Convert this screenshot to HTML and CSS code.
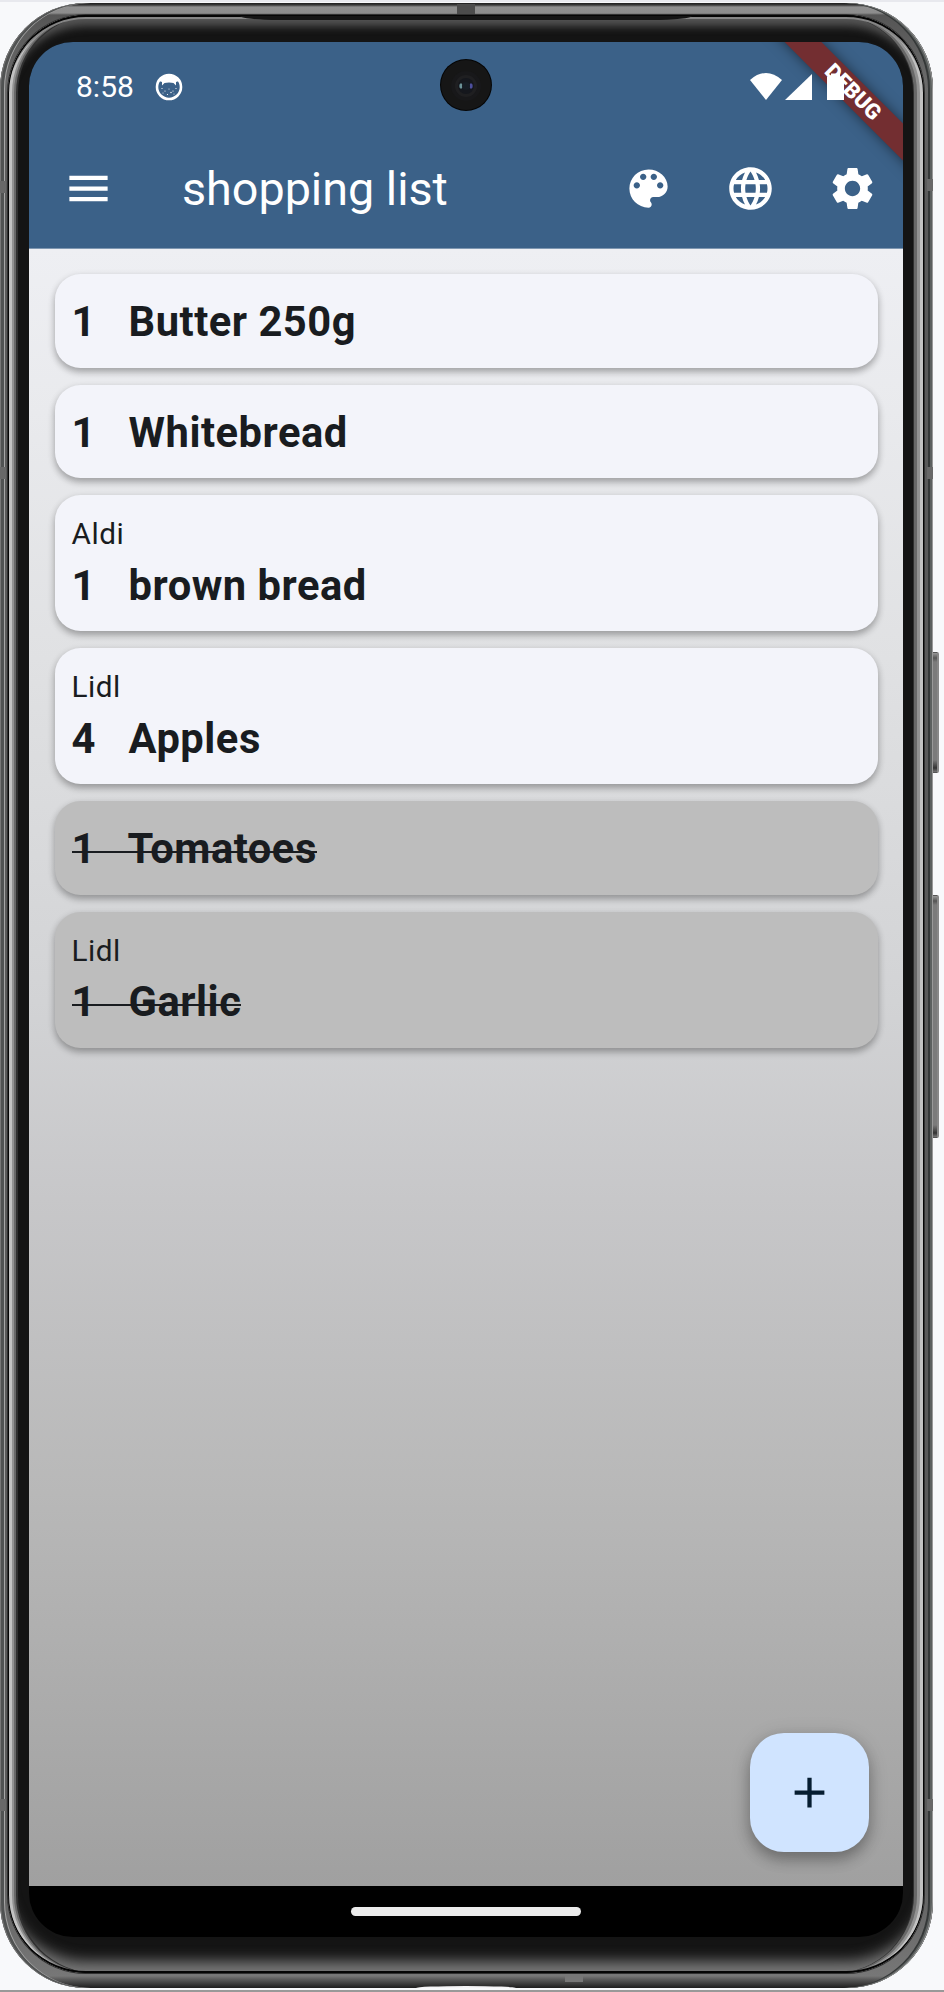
FILE: index.html
```html
<!DOCTYPE html>
<html lang="en">
<head>
<meta charset="utf-8">
<title>shopping list</title>
<link rel="stylesheet" href="styles.css">
</head>
<body>
<div class="stage">
  <span class="side-button power"></span>
  <span class="side-button volume"></span>
  <div class="frame">
    <span class="seam seam-top"></span>
    <span class="seam seam-bottom"></span>
    <span class="seam-side left-a"></span><span class="seam-side left-b"></span><span class="seam-side left-c"></span>
    <span class="seam-side right-a"></span><span class="seam-side right-b"></span><span class="seam-side right-c"></span>
    <span class="port"></span>
    <div class="bezel">
      <span class="speaker"></span>
      <div class="screen">
        <header class="top">
          <div class="status">
            <span class="time">8:58</span>
            <svg class="notif" viewBox="0 0 28 28"><circle cx="14" cy="14" r="12" fill="none" stroke="#fff" stroke-width="2.6"/><path d="M4 8C8 1 20 1 24 8L21 9V12.500L18.500 10C16 9.300 12 9.300 9.500 10L7 12.500V9Z" fill="#fff"/><g fill="#fff"><circle cx="7" cy="15.500" r=".6"/><circle cx="10" cy="18" r=".6"/><circle cx="14" cy="16" r=".5"/><circle cx="18" cy="18" r=".6"/><circle cx="21" cy="15.500" r=".6"/><circle cx="16" cy="19.500" r=".7"/><circle cx="12.500" cy="21.500" r=".6"/><circle cx="8" cy="20" r=".5"/><circle cx="19" cy="21" r=".5"/></g></svg>
            <svg class="signals" viewBox="0 0 96 30"><path d="M0 8Q16-6 32 8L16 28Z" fill="#fff"/><path d="M35 28L62 2V28Z" fill="#fff"/><path d="M77 4.500H81V1.500H90V4.500H94V28H77Z" fill="#fff"/></svg>
          </div>
          <div class="appbar">
            <svg class="icon" viewBox="0 0 24 24"><path d="M3 18h18v-2H3v2zm0-5h18v-2H3v2zm0-7v2h18V6H3z"/></svg>
            <h1 class="title">shopping list</h1>
            <svg class="icon" viewBox="0 0 24 24"><path d="M12 3c-4.970 0-9 4.030-9 9s4.030 9 9 9c.83 0 1.500-.67 1.500-1.500 0-.39-.15-.74-.39-1.010-.23-.26-.38-.61-.38-.99 0-.83.67-1.500 1.500-1.500H16c2.760 0 5-2.240 5-5 0-4.420-4.030-8-9-8zm-5.500 9c-.83 0-1.500-.67-1.500-1.500S5.670 9 6.500 9 8 9.670 8 10.500 7.330 12 6.500 12zm3-4C8.670 8 8 7.330 8 6.500S8.670 5 9.500 5s1.500.67 1.500 1.500S10.330 8 9.500 8zm5 0c-.83 0-1.500-.67-1.500-1.500S13.670 5 14.500 5s1.500.67 1.500 1.500S15.330 8 14.500 8zm3 4c-.83 0-1.500-.67-1.500-1.500S16.670 9 17.500 9s1.500.67 1.500 1.500-.67 1.500-1.500 1.500z"/></svg>
            <svg class="icon" viewBox="0 0 24 24"><path d="M11.990 2C6.470 2 2 6.480 2 12s4.470 10 9.990 10C17.520 22 22 17.520 22 12S17.520 2 11.990 2zm6.930 6h-2.950c-.32-1.250-.78-2.450-1.380-3.560 1.840.63 3.370 1.910 4.330 3.560zM12 4.040c.83 1.200 1.480 2.530 1.910 3.960h-3.820c.43-1.430 1.080-2.760 1.910-3.960zM4.260 14C4.100 13.360 4 12.690 4 12s.1-1.360.26-2h3.380c-.08.66-.14 1.320-.14 2s.06 1.340.14 2H4.260zm.82 2h2.950c.32 1.250.78 2.450 1.380 3.560-1.840-.63-3.370-1.900-4.330-3.560zm2.950-8H5.080c.96-1.660 2.490-2.930 4.330-3.560C8.810 5.550 8.350 6.750 8.030 8zM12 19.960c-.83-1.200-1.480-2.530-1.910-3.960h3.820c-.43 1.430-1.080 2.760-1.910 3.960zM14.340 14H9.660c-.09-.66-.16-1.320-.16-2s.07-1.350.16-2h4.680c.09.65.16 1.320.16 2s-.07 1.340-.16 2zm.25 5.560c.6-1.110 1.060-2.310 1.380-3.560h2.950c-.96 1.650-2.490 2.930-4.330 3.560zM16.360 14c.08-.66.14-1.320.14-2s-.06-1.340-.14-2h3.380c.16.64.26 1.310.26 2s-.1 1.360-.26 2h-3.380z"/></svg>
            <svg class="icon" viewBox="0 0 24 24"><path d="M19.140 12.940c.04-.3.06-.61.06-.94 0-.32-.02-.64-.07-.94l2.030-1.580c.18-.14.23-.41.12-.61l-1.920-3.320c-.12-.22-.37-.29-.59-.22l-2.390.96c-.5-.38-1.030-.7-1.620-.94l-.36-2.540c-.04-.24-.24-.41-.48-.41h-3.840c-.24 0-.43.17-.47.41l-.36 2.540c-.59.24-1.130.57-1.620.94l-2.390-.96c-.22-.08-.47 0-.59.22L2.740 8.870c-.12.21-.08.47.12.61l2.030 1.580c-.05.3-.09.63-.09.94s.02.64.07.94l-2.030 1.580c-.18.14-.23.41-.12.61l1.920 3.320c.12.22.37.29.59.22l2.390-.96c.5.38 1.030.7 1.620.94l.36 2.540c.05.24.24.41.48.41h3.840c.24 0 .44-.17.47-.41l.36-2.540c.59-.24 1.130-.56 1.620-.94l2.390.96c.22.08.47 0 .59-.22l1.920-3.320c.12-.22.07-.47-.12-.61l-2.010-1.580zM12 15.600c-1.980 0-3.600-1.620-3.600-3.600s1.620-3.600 3.600-3.600 3.600 1.620 3.600 3.600-1.620 3.600-3.600 3.600z"/></svg>
          </div>
        </header>
        <main class="list">
          <article class="card"><p class="item">1   Butter 250g</p></article>
          <article class="card"><p class="item">1   Whitebread</p></article>
          <article class="card"><p class="store">Aldi</p><p class="item">1   brown bread</p></article>
          <article class="card"><p class="store">Lidl</p><p class="item">4   Apples</p></article>
          <article class="card done"><p class="item">1   Tomatoes</p></article>
          <article class="card done"><p class="store">Lidl</p><p class="item">1   Garlic</p></article>
        </main>
        <nav class="navbar"><span class="pill"></span></nav>
        <button class="fab" aria-label="Add"><svg viewBox="0 0 24 24"><path d="M19 13h-6v6h-2v-6H5v-2h6V5h2v6h6v2z"/></svg></button>
        <div class="ribbon">DEBUG</div>
        <svg class="camera" viewBox="0 0 52 52"><circle cx="26" cy="26" r="26" fill="#050505"/><circle cx="26" cy="26" r="25" fill="#161616"/><circle cx="26" cy="27" r="15" fill="#18181a"/><circle cx="26" cy="27" r="11" fill="#1f1f21"/><circle cx="26" cy="27" r="8" fill="#15171d"/><ellipse cx="21" cy="27" rx="1.700" ry="2.800" fill="#6b9298"/><ellipse cx="31" cy="27" rx="1.700" ry="2.800" fill="#4d4f9e"/><circle cx="26" cy="27" r="4" fill="#161c24"/></svg>
      </div>
    </div>
  </div>
</div>
</body>
</html>
```
FILE: styles.css
```css
* { box-sizing: border-box; }
body { margin: 0; background: #f8f9fb; font-family: Roboto, "Liberation Sans", sans-serif; }
.stage {
  position: relative; width: 944px; height: 1992px; overflow: hidden;
  padding: 3px 0 0 0;
  border-bottom: 2px solid #999; box-shadow: inset 0 2px #e8e9ee;
}

/* Device body */
.frame {
  position: relative; width: 933px; height: 1985px; border-radius: 86px;
  padding: 12px 9px 15px 8px;
  background: linear-gradient(#1d1d1d 0, #3a3a3a 2px, #8f8f8f 4px, #8c8c8c 10px, #555 12px, #6a6a6a 80px, #5a5a5a 200px, #5a5a5a 1850px, #777 1973px, #5d5d5d 1976px, #1e1e1e 1985px);
  box-shadow: inset 1px 0 #777, inset -1px 0 #999, inset 4px 0 #505252, inset -3px 0 #5c605f, inset 5px 0 #a5a5a5, inset -5px 0 #353838;
}
.bezel {
  position: relative; height: 1958px; border-radius: 78px; padding: 27px 21px 36px 21px;
  background: #141414;
  box-shadow:
    0 0 0 1px #303030,
    inset 0 0 0 1px #050505,
    inset 0 2px #050505, inset 0 4px #858585,
    inset 0 -2px #050505,
    inset 4px 0 #c2c2c2, inset -4px 0 #c2c2c2,
    inset 6px 0 #929292, inset -7px 0 #929292,
    inset 8px 0 #686868, inset -10px 0 #686868,
    inset 10px 0 #303030, inset -11px 0 #303030,
    inset 0 13px 8px -2px #555,
    inset 0 -16px 14px -4px #777;
}
.speaker { position: absolute; left: 232px; top: 1px; width: 452px; height: 4px; background: #151515; border-radius: 0 0 40px 40px / 0 0 4px 4px; }
.seam { position: absolute; width: 18px; background: #4c4c4c; }
.seam-top { left: 457px; top: 1px; height: 11px; }
.seam-bottom { left: 565px; top: 1971px; height: 8px; background: #777; }
.seam-side { position: absolute; width: 6px; height: 12px; background: #686868; }
.left-a { left: 0; top: 178px; }
.left-b { left: 0; top: 464px; }
.left-c { left: 0; top: 1796px; }
.right-a { right: 0; top: 176px; }
.right-b { right: 0; top: 464px; }
.right-c { right: 0; top: 1796px; }
.port { position: absolute; left: 416px; bottom: 0; width: 100px; height: 2px; background: #f4f4f6; border-radius: 50px 50px 0 0 / 2px 2px 0 0; }
.side-button { position: absolute; left: 930px; width: 9px; border: 1px solid #555; border-right: 2px solid #888; border-radius: 0 2px 2px 0; background: linear-gradient(#999 0, #555 5px, #7b7b7b 9px, #7b7b7b calc(100% - 12px), #333 calc(100% - 4px), #777); }
.power { top: 652px; height: 121px; }
.volume { top: 895px; height: 243px; }

/* Screen */
.screen { position: relative; height: 1895px; width: 874px; border-radius: 44px; overflow: hidden; display: flex; flex-direction: column; background: #000; }
.top { height: 207px; background: #3b6188; color: #fff; display: flex; flex-direction: column; border-bottom: 1px solid #7f97b1; flex: none; }
.status { height: 95px; display: flex; align-items: center; padding: 0 57px 5px 47px; }
.time { font-size: 30px; line-height: 36px; }
.notif { width: 28px; height: 28px; margin-left: 21.500px; }
.signals { position: relative; z-index: 2; width: 96px; height: 30px; margin-left: auto; }
.appbar { height: 103px; display: flex; align-items: center; padding: 0 25.500px 0 34px; }
.icon { width: 51px; height: 51px; fill: #fff; margin-left: 51px; flex: none; }
.icon:first-child { margin-left: 0; }
.title { margin: 0 auto 0 68px; font-size: 46.700px; line-height: 60px; font-weight: 400; }
.list {
  flex: 1; display: flex; flex-direction: column; gap: 17px; padding: 25px 25.500px;
  background: linear-gradient(#eeeff3 0, #e9eaed 10%, #e0e1e3 25%, #d2d3d5 46%, #c7c7c9 58%, #b8b8b8 76%, #a0a0a0 100%);
}
.card { border-radius: 25.500px; padding: 18px 17px 16px; background: #f3f4fa; color: #191c20; box-shadow: 0 4px 7px rgba(0,0,0,.27), 0 2px 8px rgba(0,0,0,.08); }
.card.done { background: #bdbdbd; }
.card p { margin: 0; white-space: pre; }
.item { font-size: 41.700px; line-height: 59.500px; font-weight: 700; letter-spacing: .51px; }
/* Strike line sits a little below the font's own line-through position */
.done .item { width: fit-content; background: linear-gradient(#191c20, #191c20) 0 32px / 100% 2px no-repeat; }
.store { font-size: 29.760px; line-height: 42.500px; letter-spacing: .53px; }
.navbar { height: 51px; flex: none; display: flex; justify-content: center; padding-top: 21px; }
.pill { width: 230px; height: 9px; border-radius: 5px; background: #ebebeb; }

.fab { position: absolute; right: 34px; bottom: 85px; width: 119px; height: 119px; padding: 0; border: 0; border-radius: 34px; background: #d0e4ff; display: flex; align-items: center; justify-content: center; box-shadow: 0 8px 14px rgba(0,0,0,.24), 0 3px 20px rgba(0,0,0,.16); }
.fab svg { width: 51px; height: 51px; fill: #061d31; }
.ribbon { position: absolute; left: 704px; top: 37px; width: 240px; height: 26px; transform: rotate(45deg); background: #732e31; color: #fff; font-weight: 900; font-size: 21.700px; line-height: 26px; text-align: center; box-shadow: 0 0 13px rgba(0,0,0,.5); }
.camera { position: absolute; left: 411px; top: 17px; width: 52px; height: 52px; }
```
